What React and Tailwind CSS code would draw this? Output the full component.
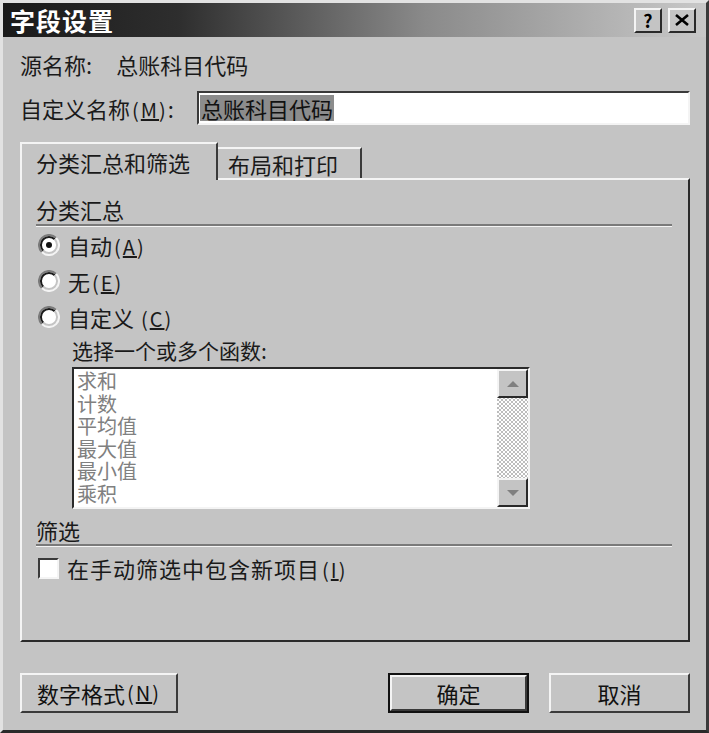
import React from "react";

const font = { fontFamily: '"Noto Sans CJK SC", "Noto Sans", sans-serif' };

function Radio({ checked }) {
  return (
    <svg width="22" height="22" viewBox="0 0 22 22" className="shrink-0">
      <circle cx="11" cy="11" r="10" fill="#ffffff" />
      <path d="M3.9 18.1 A10 10 0 0 1 18.1 3.9" stroke="#7a7a7a" strokeWidth="2" fill="none" />
      <path d="M5.3 16.7 A8 8 0 0 1 16.7 5.3" stroke="#1a1a1a" strokeWidth="2" fill="none" />
      <path d="M18.1 3.9 A10 10 0 0 1 3.9 18.1" stroke="#f4f4f4" strokeWidth="2" fill="none" />
      <path d="M16.7 5.3 A8 8 0 0 1 5.3 16.7" stroke="#c4c4c4" strokeWidth="2" fill="none" />
      {checked && <circle cx="11" cy="11" r="3" fill="#111" />}
    </svg>
  );
}

function Btn({ children, def, className = "" }) {
  const inner = (
    <div className="h-full w-full border-2 border-t-[#f4f4f4] border-l-[#f4f4f4] border-r-[#3a3a3a] border-b-[#3a3a3a] flex items-center justify-center text-[22px] text-[#111] bg-[#c4c4c4]">
      {children}
    </div>
  );
  return (
    <div className={`h-[40px] ${def ? "border-2 border-[#111]" : ""} ${className}`}>{inner}</div>
  );
}

function U({ c }) {
  return (
    <span className="text-[20px] ml-[2px] tracking-[2px]">
      (<span className="underline">{c}</span>)
    </span>
  );
}

export default function App() {
  return (
    <div style={font} className="w-[709px] h-[733px] bg-[#c4c4c4] border-[3px] border-t-[#e2e2e2] border-l-[#e2e2e2] border-r-[#3a3a3a] border-b-[#2a2a2a] flex flex-col overflow-hidden text-[#1a1a1a]">
      {/* Title bar */}
      <div className="h-[34px] shrink-0 flex items-center bg-[linear-gradient(90deg,#1a1a1a_0%,#2e2e2e_25%,#8a8a8a_60%,#c8c8c8_100%)] pl-[7px] pr-[10px]">
        <span className="text-white font-bold text-[25px] leading-none tracking-[1px]">字段设置</span>
        <div className="ml-auto flex gap-[6px]">
          <div className="w-[28px] h-[25px] bg-[#c4c4c4] border-2 border-t-[#f4f4f4] border-l-[#f4f4f4] border-r-[#2a2a2a] border-b-[#2a2a2a] flex items-center justify-center font-bold text-[18px] leading-none text-black">?</div>
          <div className="w-[28px] h-[25px] bg-[#c4c4c4] border-2 border-t-[#f4f4f4] border-l-[#f4f4f4] border-r-[#2a2a2a] border-b-[#2a2a2a] flex items-center justify-center">
            <svg width="14" height="12" viewBox="0 0 14 12"><path d="M1 1 L13 11 M13 1 L1 11" stroke="#000" strokeWidth="2.6" /></svg>
          </div>
        </div>
      </div>

      <div className="flex flex-col pl-[17px] pr-[16px]">
        {/* Source name */}
        <div className="mt-[13px] h-[28px] flex items-center text-[22px] leading-none">
          <span>源名称:</span>
          <span className="ml-[24px]">总账科目代码</span>
        </div>

        {/* Custom name */}
        <div className="mt-[13px] h-[34px] flex items-center">
          <span className="text-[22px] leading-none w-[177px] shrink-0">自定义名称<U c="M" />:</span>
          <div className="flex-1 h-full bg-white border-2 border-t-[#3a3a3a] border-l-[#3a3a3a] border-r-[#f4f4f4] border-b-[#f4f4f4] flex items-center pl-[1px]">
            <span className="bg-[#8c8c8c] text-[#111] text-[22px] leading-[26px] px-[1px]">总账科目代码</span>
          </div>
        </div>

        {/* Tabs */}
        <div className="mt-[17px] h-[36px] flex items-end">
          <div className="relative z-10 -mb-[2px] h-[38px] w-[198px] bg-[#c4c4c4] border-t-2 border-l-2 border-r-2 border-t-[#f4f4f4] border-l-[#f4f4f4] border-r-[#3a3a3a] flex items-center pl-[14px] text-[22px] leading-none">
            分类汇总和筛选
          </div>
          <div className="h-[31px] w-[144px] bg-[#c4c4c4] border-t-2 border-r-2 border-t-[#f4f4f4] border-r-[#3a3a3a] flex items-center pl-[10px] text-[22px] leading-none">
            布局和打印
          </div>
        </div>

        {/* Panel */}
        <div className="h-[464px] border-2 border-t-[#f4f4f4] border-l-[#f4f4f4] border-r-[#2a2a2a] border-b-[#2a2a2a] flex flex-col pl-[14px] pr-[16px]">
          <div className="pt-[14px] h-[44px] flex items-center text-[22px] leading-none">分类汇总</div>
          <div className="h-[3px] border-t-2 border-b border-t-[#7a7a7a] border-b-[#f4f4f4]" />

          <div className="h-[36px] flex items-center pl-[2px] gap-[8px] text-[22px] leading-none">
            <Radio checked />
            <span>自动<U c="A" /></span>
          </div>
          <div className="h-[36px] flex items-center pl-[2px] gap-[8px] text-[22px] leading-none">
            <Radio />
            <span>无<U c="E" /></span>
          </div>
          <div className="h-[36px] flex items-center pl-[2px] gap-[8px] text-[22px] leading-none">
            <Radio />
            <span>自定义 <U c="C" /></span>
          </div>

          <div className="h-[30px] flex items-center pl-[36px] text-[21px] leading-none">选择一个或多个函数:</div>

          <div className="mt-[2px] ml-[36px] w-[458px] h-[142px] border-2 border-t-[#2a2a2a] border-l-[#2a2a2a] border-r-[#f4f4f4] border-b-[#f4f4f4] bg-white flex">
            <div className="flex-1 overflow-hidden pl-[3px] pt-[1px] text-[20px] leading-[22.5px] text-[#808080]">
              <div>求和</div>
              <div>计数</div>
              <div>平均值</div>
              <div>最大值</div>
              <div>最小值</div>
              <div>乘积</div>
            </div>
            <div className="w-[31px] flex flex-col bg-[repeating-conic-gradient(#bdbdbd_0_25%,#ffffff_0_50%)] bg-[length:4px_4px]">
              <div className="h-[29px] bg-[#c4c4c4] border-2 border-t-[#f4f4f4] border-l-[#f4f4f4] border-r-[#2a2a2a] border-b-[#2a2a2a] flex items-center justify-center">
                <svg width="14" height="8" viewBox="0 0 14 8"><path d="M7 1 L13 7 L1 7 Z" fill="#808080" /></svg>
              </div>
              <div className="flex-1" />
              <div className="h-[29px] bg-[#c4c4c4] border-2 border-t-[#f4f4f4] border-l-[#f4f4f4] border-r-[#2a2a2a] border-b-[#2a2a2a] flex items-center justify-center">
                <svg width="14" height="8" viewBox="0 0 14 8"><path d="M1 1 L13 1 L7 7 Z" fill="#808080" /></svg>
              </div>
            </div>
          </div>

          <div className="mt-[7px] h-[28px] flex items-center text-[22px] leading-none">筛选</div>
          <div className="h-[3px] border-t-2 border-b border-t-[#7a7a7a] border-b-[#f4f4f4]" />

          <div className="mt-[9px] h-[24px] flex items-center pl-[2px] gap-[8px] text-[22px] leading-none">
            <div className="w-[21px] h-[21px] bg-white border-2 border-t-[#3a3a3a] border-l-[#3a3a3a] border-r-[#f4f4f4] border-b-[#f4f4f4]" />
            <span className="tracking-[1px]">在手动筛选中包含新项目<U c="I" /></span>
          </div>
        </div>

        {/* Buttons */}
        <div className="mt-[31px] flex">
          <Btn className="w-[158px]">数字格式<U c="N" /></Btn>
          <Btn def className="ml-auto w-[141px]">确定</Btn>
          <Btn className="ml-[20px] w-[141px]">取消</Btn>
        </div>
      </div>
    </div>
  );
}
